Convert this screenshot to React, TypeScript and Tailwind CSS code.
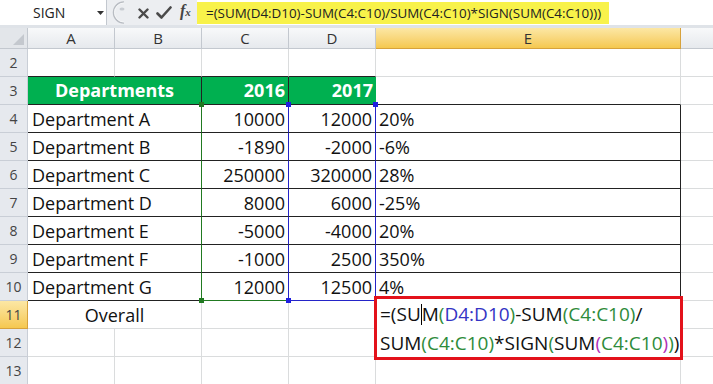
import React from "react";

const font = "font-['Open_Sans',sans-serif]";

function Sq({ pos, color }: { pos: string; color: string }) {
  return <div className={`absolute w-[5px] h-[5px] z-10 ${pos} ${color}`} />;
}

export default function App() {
  const depts: [string, string, string, string][] = [
    ["Department A", "10000", "12000", "20%"],
    ["Department B", "-1890", "-2000", "-6%"],
    ["Department C", "250000", "320000", "28%"],
    ["Department D", "8000", "6000", "-25%"],
    ["Department E", "-5000", "-4000", "20%"],
    ["Department F", "-1000", "2500", "350%"],
    ["Department G", "12000", "12500", "4%"],
  ];
  const rowHdr =
    "flex items-center justify-center border-r border-b border-[#c9ced6] bg-[#e6e9ee] text-[14px] text-[#444]";
  const grid = "border-r border-b border-[#dadcdd]";
  const cellText = "text-[18px] text-[#111] leading-none";

  return (
    <div className={`w-[713px] h-[384px] overflow-hidden bg-white ${font}`}>
      {/* Formula bar */}
      <div className="flex h-[28px] bg-[#dfe3e8] pb-[3px]">
        <div className="relative flex items-center w-[107px] bg-white border-r border-[#c3c8cf] pl-[33px] text-[14px] text-[#222]">
          SIGN
          <svg className="absolute left-[97px] top-[11px]" width="7" height="4" viewBox="0 0 7 4">
            <path d="M0 0 L7 0 L3.5 4 Z" fill="#333" />
          </svg>
        </div>
        <div className="relative flex items-center w-[90px] bg-[#eceef1]">
          <svg className="absolute left-[5px] top-[1px]" width="14" height="23" viewBox="0 0 14 23">
            <path d="M12 1 A10 10 0 0 0 12 22" fill="none" stroke="#b8bcc2" strokeWidth="1.5" />
            <path d="M12 2 A9 9 0 0 0 12 21" fill="none" stroke="#f6f7f8" strokeWidth="1" />
            <ellipse cx="10" cy="8" rx="2.5" ry="1.5" fill="#c8ccd2" />
          </svg>
          <svg className="absolute left-[31px] top-[8px]" width="11" height="11" viewBox="0 0 11 11">
            <path d="M1.5 1.5 L9.5 9.5 M9.5 1.5 L1.5 9.5" stroke="#4a4a4a" strokeWidth="2.4" strokeLinecap="round" />
          </svg>
          <svg className="absolute left-[49px] top-[6px]" width="16" height="14" viewBox="0 0 16 14">
            <path d="M1.5 7.5 L5.5 11.5 L14.5 1.5" fill="none" stroke="#4a4a4a" strokeWidth="2.6" strokeLinecap="round" strokeLinejoin="round" />
          </svg>
          <span className="absolute left-[73px] top-[3px] text-[16px] italic font-bold font-['Liberation_Serif',serif] text-[#444] leading-none">
            f<span className="text-[11px]">x</span>
          </span>
        </div>
        <div className="flex-1 bg-white flex items-center">
          <div className="h-[22px] mt-[1px] flex items-center bg-[#f8f24a] pl-[9px] pr-[8px] text-[13.4px] text-[#222] whitespace-nowrap">
            =(SUM(D4:D10)-SUM(C4:C10)/SUM(C4:C10)*SIGN(SUM(C4:C10)))
          </div>
        </div>
      </div>

      {/* Sheet grid */}
      <div className="grid grid-cols-[28px_87px_87px_87px_87px_305px_1fr] grid-rows-[21px_repeat(12,28px)]">
        {/* header row */}
        <div className="relative bg-[#e3e6ea] border-r border-b border-[#c3c8cf]">
          <svg className="absolute right-[3px] bottom-[3px]" width="11" height="11" viewBox="0 0 11 11">
            <path d="M11 0 L11 11 L0 11 Z" fill="#c4c8ce" />
          </svg>
        </div>
        {["A", "B", "C", "D"].map((c) => (
          <div
            key={c}
            className="flex items-center justify-center bg-linear-to-b from-[#f8f9fa] to-[#e6e9ed] border-r border-b border-[#c3c8cf] text-[15px] text-[#333]"
          >
            {c}
          </div>
        ))}
        <div className="flex items-center justify-center bg-linear-to-b from-[#fce7a4] to-[#f5c84e] border-r border-b border-[#d7a23c] text-[15px] text-[#333]">
          E
        </div>
        <div className="bg-linear-to-b from-[#f8f9fa] to-[#e6e9ed] border-b border-[#c3c8cf]" />

        {/* row 2 */}
        <div className={rowHdr}>2</div>
        <div className="border-r border-b border-r-[#dadcdd] border-b-[#222]" />
        <div className="border-r border-b border-r-[#dadcdd] border-b-[#222]" />
        <div className="border-r border-b border-r-[#dadcdd] border-b-[#222]" />
        <div className="border-r border-b border-r-[#dadcdd] border-b-[#222]" />
        <div className={grid} />
        <div className="border-b border-[#dadcdd]" />

        {/* row 3 */}
        <div className={rowHdr}>3</div>
        <div className="col-span-2 flex items-center justify-center bg-[#00b050] border-r border-b border-[#222] text-[18px] font-bold text-white">
          Departments
        </div>
        <div className="flex items-center justify-end pr-[3px] bg-[#00b050] border-r border-b border-[#222] text-[18px] font-bold text-white">
          2016
        </div>
        <div className="flex items-center justify-end pr-[3px] bg-[#00b050] border-b border-[#222] text-[18px] font-bold text-white">
          2017
        </div>
        <div className="border-r border-b border-r-[#dadcdd] border-b-[#222]" />
        <div className="border-b border-[#dadcdd]" />

        {/* rows 4-10 */}
        {depts.map((d, i) => {
          const first = i === 0;
          const last = i === depts.length - 1;
          return (
            <React.Fragment key={d[0]}>
              <div className={rowHdr}>{i + 4}</div>
              <div
                className={`col-span-2 flex items-center pl-[4px] border-r border-b border-r-[#217a21] border-b-[#222] ${cellText}`}
              >
                {d[0]}
              </div>
              <div
                className={`relative flex items-center justify-end pr-[3px] border-r border-b border-r-[#2424c8] ${
                  last ? "border-b-[#217a21]" : "border-b-[#222]"
                } ${cellText}`}
              >
                {first && <Sq pos="-left-[3px] -top-[3px]" color="bg-[#217a21]" />}
                {last && <Sq pos="-left-[3px] -bottom-[3px]" color="bg-[#217a21]" />}
                {d[1]}
              </div>
              <div
                className={`relative flex items-center justify-end pr-[3px] border-r border-b border-r-[#2424c8] ${
                  last ? "border-b-[#2424c8]" : "border-b-[#222]"
                } ${cellText}`}
              >
                {first && <Sq pos="-left-[3px] -top-[3px]" color="bg-[#1f1fe0]" />}
                {first && <Sq pos="-right-[3px] -top-[3px]" color="bg-[#1f1fe0]" />}
                {last && <Sq pos="-left-[3px] -bottom-[3px]" color="bg-[#1f1fe0]" />}
                {d[2]}
              </div>
              <div className={`flex items-center pl-[3px] border-r border-b border-[#222] ${cellText}`}>
                {d[3]}
              </div>
              <div className="border-b border-[#dadcdd]" />
            </React.Fragment>
          );
        })}

        {/* row 11 */}
        <div className="flex items-center justify-center border-r border-b border-[#d7a23c] bg-linear-to-b from-[#fce7a4] to-[#f5c84e] text-[14px] text-[#444]">
          11
        </div>
        <div className={`col-span-2 flex items-center justify-center border-r border-b border-[#dadcdd] ${cellText}`}>
          Overall
        </div>
        <div className={grid} />
        <div className={grid} />
        <div className="relative border-r border-b border-[#dadcdd]">
          <div className="absolute z-20 -left-[2px] -top-[5px] w-[309px] h-[64px] border-[3px] border-[#e3121b] bg-white px-[3px] pt-[1px] text-[19px] leading-[29px] text-[#111] whitespace-nowrap">
            <div>
              =(SU
              <span className="inline-block w-px h-[21px] bg-black align-[-4px]" />
              M<span className="text-[#2e8b3a]">(</span>
              <span className="text-[#3434c4]">D4:D10</span>
              <span className="text-[#2e8b3a]">)</span>-SUM
              <span className="text-[#2e8b3a]">(C4:C10)</span>/
            </div>
            <div>
              SUM<span className="text-[#2e8b3a]">(C4:C10)</span>*SIGN
              <span className="text-[#2e8b3a]">(</span>SUM
              <span className="text-[#b02fb8]">(</span>
              <span className="text-[#2e8b3a]">C4:C10</span>
              <span className="text-[#b02fb8]">)</span>
              <span className="text-[#2e8b3a]">)</span>)
            </div>
          </div>
        </div>
        <div className="border-b border-[#dadcdd]" />

        {/* rows 12, 13 */}
        {[12, 13].map((r) => (
          <React.Fragment key={r}>
            <div className={rowHdr}>{r}</div>
            <div className={grid} />
            <div className={grid} />
            <div className={grid} />
            <div className={grid} />
            <div className={grid} />
            <div className="border-b border-[#dadcdd]" />
          </React.Fragment>
        ))}
      </div>
    </div>
  );
}
